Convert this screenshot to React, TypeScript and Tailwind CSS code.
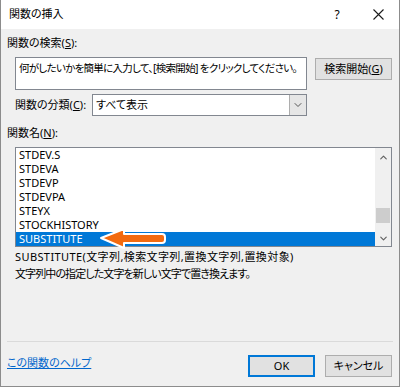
import { ChevronDown, ChevronUp } from 'lucide-react'

const items = ['STDEV.S', 'STDEVA', 'STDEVP', 'STDEVPA', 'STEYX', 'STOCKHISTORY', 'SUBSTITUTE']

export default function App() {
  return (
    <div className="relative w-[400px] h-[387px] flex flex-col border-x border-b border-[#8c8c8c] bg-[#f0f0f0] text-[11px] text-black font-['Noto_Sans','Noto_Sans_CJK_JP',sans-serif] [font-feature-settings:'palt'] overflow-hidden">
      {/* Title bar */}
      <div className="h-[29px] shrink-0 bg-white flex items-center pl-[8px]">
        <span className="text-[11px]">関数の挿入</span>
        <span className="ml-auto text-[12px] w-[10px] text-center">?</span>
        <svg className="ml-[31px] mr-[15px]" width="11" height="11" viewBox="0 0 11 11">
          <path d="M0.5 0.5 L10.5 10.5 M10.5 0.5 L0.5 10.5" stroke="#1a1a1a" strokeWidth="1.1" />
        </svg>
      </div>

      <div className="flex-1 flex flex-col px-[6px]">
        {/* Search */}
        <div className="mt-[7px] h-[14px] leading-[14px]">
          関数の検索(<span className="underline">S</span>):
        </div>
        <div className="mt-[7px] flex items-start pl-[8px]">
          <div className="w-[292px] h-[33px] bg-white border border-[#828790] pl-[3px] pt-[3px] leading-[14px] text-[10.5px] tracking-[-0.7px] whitespace-nowrap overflow-hidden">
            何がしたいかを簡単に入力して、[検索開始] をクリックしてください。
          </div>
          <div className="ml-[8px] mt-[1px] w-[77px] h-[22px] bg-[#e1e1e1] border border-[#adadad] flex items-center justify-center">
            検索開始(<span className="underline">G</span>)
          </div>
        </div>

        {/* Category */}
        <div className="mt-[4px] flex items-center pl-[8px]">
          <div className="w-[77px]">
            関数の分類(<span className="underline">C</span>):
          </div>
          <div className="w-[215px] h-[22px] bg-white border border-[#828790] flex items-center">
            <span className="pl-[3px]">すべて表示</span>
            <div className="ml-auto w-[17px] h-full bg-[#e6e6e6] border-l border-[#adadad] flex items-center justify-center">
              <ChevronDown size={12} strokeWidth={2} color="#555" />
            </div>
          </div>
        </div>

        {/* List label */}
        <div className="mt-[10px] h-[14px] leading-[14px]">
          関数名(<span className="underline">N</span>):
        </div>

        {/* List */}
        <div className="mt-[7px] ml-[8px] w-[377px] h-[100px] bg-white border border-[#828790] flex">
          <div className="flex-1 flex flex-col">
            {items.map((it) => (
              <div
                key={it}
                className={`h-[14px] leading-[14px] pl-[3px] ${
                  it === 'SUBSTITUTE' ? 'bg-[#0078d7] text-white' : ''
                }`}
              >
                {it}
              </div>
            ))}
          </div>
          <div className="w-[16px] bg-[#f0f0f0] flex flex-col items-center">
            <div className="h-[16px] flex items-center justify-center mt-[1px]">
              <ChevronUp size={11} strokeWidth={2.5} color="#606060" />
            </div>
            <div className="mt-[43px] w-[14px] h-[15px] bg-[#cdcdcd]" />
            <div className="mt-auto h-[16px] flex items-center justify-center">
              <ChevronDown size={11} strokeWidth={2.5} color="#606060" />
            </div>
          </div>
        </div>

        {/* Description */}
        <div className="mt-[3px] ml-[8px] h-[14px] leading-[14px] tracking-[0.4px]">
          SUBSTITUTE(文字列,検索文字列,置換文字列,置換対象)
        </div>
        <div className="mt-[3px] ml-[8px] h-[14px] leading-[14px] tracking-[-0.9px]">
          文字列中の指定した文字を新しい文字で置き換えます。
        </div>

        <div className="mt-[60px] h-px bg-[#dadada]" />

        {/* Footer */}
        <div className="mt-[13px] flex items-start">
          <a className="mt-[1px] h-[14px] leading-[14px] text-[#0066cc] underline">この関数のヘルプ</a>
          <div className="ml-auto mr-[1px] flex gap-[10px]">
            <div className="w-[67px] h-[22px] bg-[#e1e1e1] border-2 border-[#0078d7] flex items-center justify-center">
              OK
            </div>
            <div className="w-[67px] h-[22px] bg-[#e1e1e1] border border-[#adadad] flex items-center justify-center">
              キャンセル
            </div>
          </div>
        </div>
      </div>

      {/* Orange arrow callout */}
      <svg className="absolute left-[96px] top-[226px]" width="72" height="26" viewBox="0 0 72 26">
        <path
          d="M4 12 L27 3 L27 8 L65 8 Q68 8 68 11 L68 14 Q68 17 65 17 L27 17 L27 22 Z"
          fill="#f26a10"
          stroke="#ffffff"
          strokeWidth="2"
          strokeLinejoin="round"
        />
      </svg>
    </div>
  )
}
